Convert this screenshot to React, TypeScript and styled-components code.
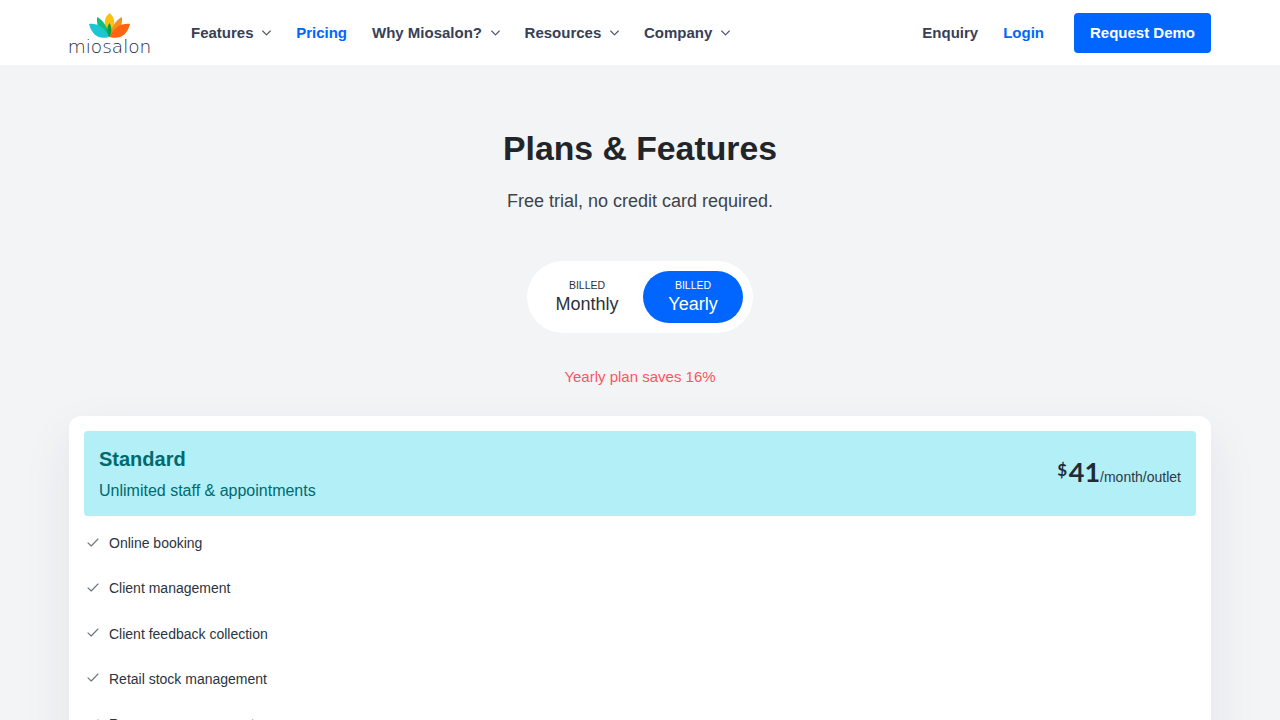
import React from 'react';
import styled, { createGlobalStyle } from 'styled-components';

const Global = createGlobalStyle`
  html, body { margin: 0; padding: 0; height: 100%; overflow: hidden; background: #f3f4f6; }
  body { font-family: "Liberation Sans", Arial, sans-serif; color: #212529; text-rendering: optimizeLegibility; }
  * { box-sizing: border-box; }
`;
const Page = styled.div`height: 720px; overflow: hidden; background: #f3f4f6;`;
const Header = styled.header`
  height: 65px; background: #fff;
  padding: 0 69px; display: flex; align-items: center; justify-content: space-between;
`;
const Left = styled.div`display: flex; align-items: center;`;
const Logo = styled.div`width: 81px; margin-right: 41px; display: flex; flex-direction: column; align-items: center; padding-top: 1px;`;
const LogoText = styled.div`
  font-family: "DejaVu Sans", sans-serif; font-weight: 200; font-size: 18.5px; line-height: 15px; color: #1c2a44; white-space: nowrap; margin-top: 1px;
`;
const Nav = styled.nav`display: flex; align-items: center; gap: 25px; padding-top: 1px;`;
const NavItem = styled.a<{ $active?: boolean }>`
  font-size: 15px; font-weight: 700; line-height: 22px; color: ${p => (p.$active ? '#0066ff' : '#374056')};
  display: flex; align-items: center; gap: 8.6px; white-space: nowrap;
`;
const Right = styled.div`display: flex; align-items: center;`;
const Links = styled.div`display: flex; align-items: center; gap: 25px; margin-right: 30px; padding-top: 1px;`;
const Demo = styled.button`
  width: 137px; height: 40px; border: 0; border-radius: 4px; background: #0066ff; color: #fff; padding: 0;
  font: 700 15px "Liberation Sans", sans-serif;
`;
const Main = styled.main`padding: 0 69px; display: flex; flex-direction: column; align-items: center;`;
const Title = styled.h1`margin: 63px 0 0; font-size: 33.75px; line-height: 41px; font-weight: 700; color: #212529;`;
const Sub = styled.p`margin: 19px 0 0; font-size: 18px; line-height: 27px; color: #3c434a;`;
const Toggle = styled.div`
  margin-top: 46px; width: 226px; height: 72px; border-radius: 36px; background: #fff; padding: 10px;
  display: flex; justify-content: space-between;
`;
const Option = styled.div<{ $active?: boolean }>`
  width: 100px; height: 52px; border-radius: 26px; display: flex; flex-direction: column; align-items: center; justify-content: center;
  background: ${p => (p.$active ? '#0066ff' : 'transparent')}; color: ${p => (p.$active ? '#fff' : '#2b333b')};
`;
const Billed = styled.span`font-size: 10.5px; line-height: 12px; margin-top: 1px;`;
const Period = styled.span`font-size: 18px; line-height: 24px; margin-top: 1px;`;
const Save = styled.p`margin: 33px 0 0; font-size: 15px; line-height: 22px; color: #f8575f;`;
const Card = styled.section`
  margin-top: 28px; width: 100%; background: #fff; border-radius: 12px; padding: 15px;
  box-shadow: 0 20px 50px 0 rgba(30, 40, 70, .08);
`;
const Plan = styled.div`
  height: 85px; background: #b2eff7; border-radius: 4px; padding: 15px;
  display: flex; align-items: center; justify-content: space-between;
`;
const PlanInfo = styled.div`display: flex; flex-direction: column; color: #006a6f; padding-top: 2px;`;
const PlanName = styled.div`font-size: 20px; font-weight: 700; line-height: 25px;`;
const PlanDesc = styled.div`font-size: 16px; line-height: 24px; margin-top: 7px;`;
const Price = styled.div`display: flex; align-items: baseline; color: #212b36; margin-top: -4px;`;
const Currency = styled.span`font-size: 17px; font-weight: 700; position: relative; top: -6px; margin-right: 1.6px; font-family: Lato, sans-serif;`;
const Amount = styled.span`font-size: 27px; font-weight: 700; font-family: Lato, sans-serif; line-height: 32px;`;
const Per = styled.span`font-size: 14px; color: #2f3a46;`;
const List = styled.ul`list-style: none; margin: 4.6px 0 0; padding: 0;`;
const Item = styled.li`height: 45.25px; display: flex; align-items: center; gap: 10px; padding-left: 3px; font-size: 14px; color: #2b3440;`;
const CheckWrap = styled.span`display: flex; margin-top: -2px;`;
const Chevron = () => (
  <svg width="9" height="6" viewBox="0 0 9 6" fill="none" stroke="#4a5266" strokeWidth="1.1" strokeLinecap="round" strokeLinejoin="round"><path d="M.7 1 4.5 4.8 8.3 1" /></svg>
);
const Check = () => (
  <CheckWrap>
    <svg width="12" height="9" viewBox="0 0 12 9" fill="none" stroke="#6b7280" strokeWidth="1.1" strokeLinecap="round" strokeLinejoin="round"><path d="M1 4.8 4.2 8 11 1" /></svg>
  </CheckWrap>
);
const Mark = () => (
  <svg width="41" height="25" viewBox="0 0 41 25">
    <path d="M20.5 0C24 3 26 7 25 12L20.5 24 16 12C15 7 17 3 20.5 0z" fill="#fdc010" />
    <path d="M33 4C27 7 22 14 20.5 24 28 22 34 15 33 4z" fill="#f5901e" />
    <path d="M8 4C14 7 19 14 20.5 24 13 22 7 15 8 4z" fill="#10bd7a" />
    <path d="M0 11C7 10 15 13 20 24 10 27 3 22 0 11z" fill="#1dc5d3" />
    <path d="M41 11C33 10 25 14 20.5 24 31 27 38 22 41 11z" fill="#ff6410" />
    <path d="M20.5 10C17.5 14 17.5 19 20.5 24 23 19 23 14 20.5 10z" fill="#0f9e3c" />
  </svg>
);
const items = ['Online booking', 'Client management', 'Client feedback collection', 'Retail stock management', 'Resource management'];
export default function App() {
  return (
    <Page>
      <Global />
      <Header>
        <Left>
          <Logo><Mark /><LogoText>miosalon</LogoText></Logo>
          <Nav>
            <NavItem>Features <Chevron /></NavItem>
            <NavItem $active>Pricing</NavItem>
            <NavItem>Why Miosalon? <Chevron /></NavItem>
            <NavItem>Resources <Chevron /></NavItem>
            <NavItem>Company <Chevron /></NavItem>
          </Nav>
        </Left>
        <Right>
          <Links>
            <NavItem>Enquiry</NavItem>
            <NavItem $active>Login</NavItem>
          </Links>
          <Demo>Request Demo</Demo>
        </Right>
      </Header>
      <Main>
        <Title>Plans &amp; Features</Title>
        <Sub>Free trial, no credit card required.</Sub>
        <Toggle>
          <Option><Billed>BILLED</Billed><Period>Monthly</Period></Option>
          <Option $active><Billed>BILLED</Billed><Period>Yearly</Period></Option>
        </Toggle>
        <Save>Yearly plan saves 16%</Save>
        <Card>
          <Plan>
            <PlanInfo><PlanName>Standard</PlanName><PlanDesc>Unlimited staff &amp; appointments</PlanDesc></PlanInfo>
            <Price><Currency>$</Currency><Amount>41</Amount><Per>/month/outlet</Per></Price>
          </Plan>
          <List>{items.map(t => <Item key={t}><Check />{t}</Item>)}</List>
        </Card>
      </Main>
    </Page>
  );
}
